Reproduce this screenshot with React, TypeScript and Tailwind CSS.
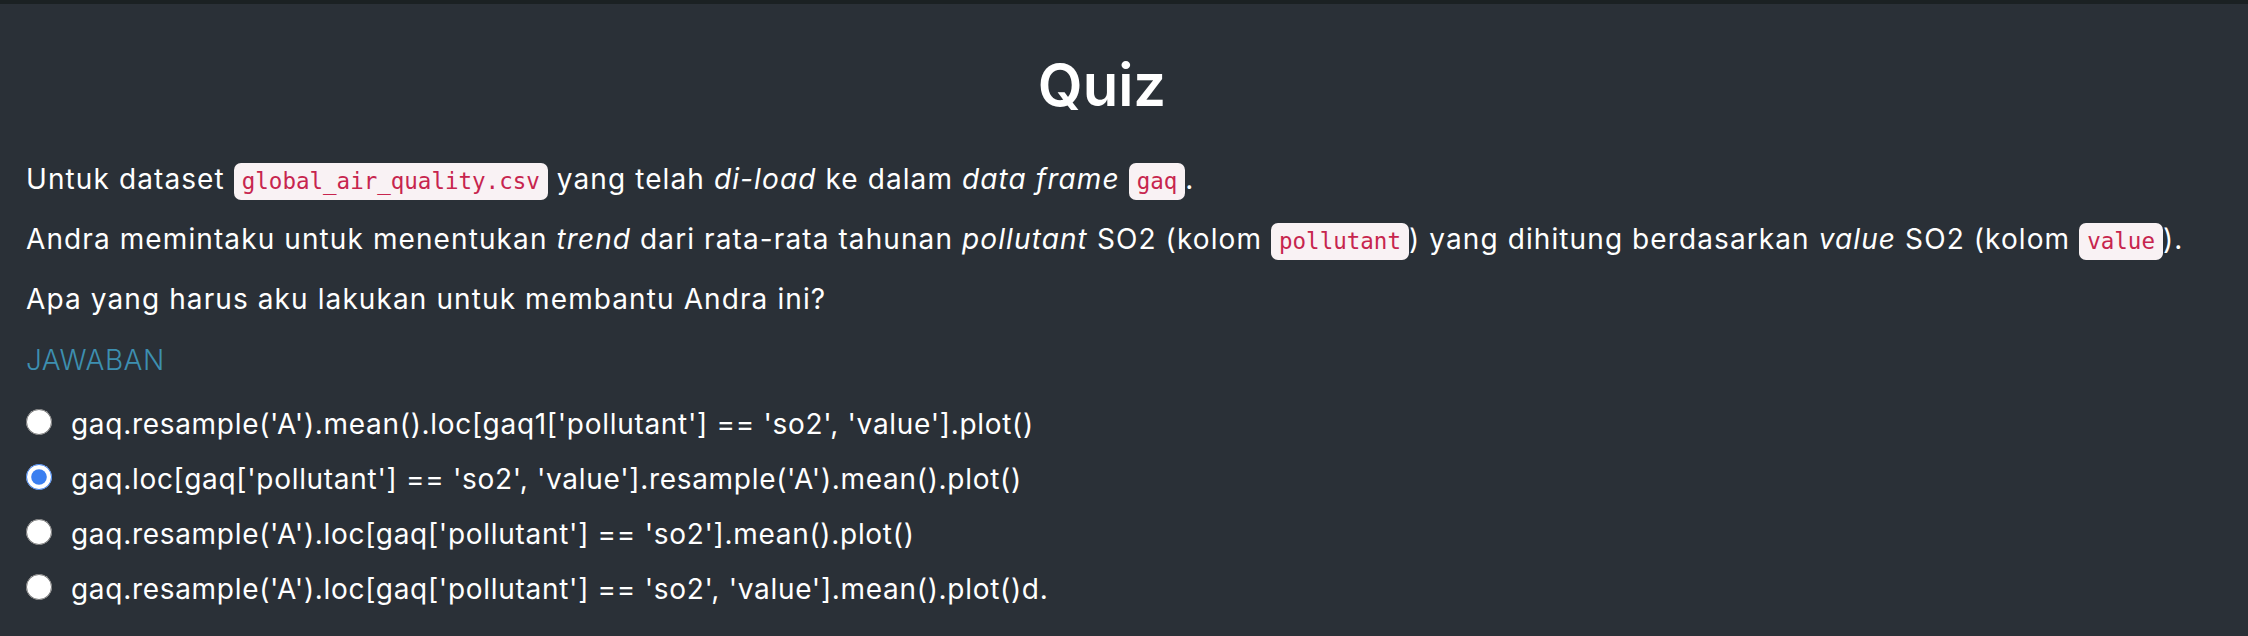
import type { ReactNode } from "react";

function Code({ children }: { children: ReactNode }) {
  return (
    <code className="inline-block h-[37px] px-[8px] rounded-[7px] bg-[#f9f2f4] text-[#c7254e] font-['DejaVu_Sans_Mono',monospace] text-[22.5px] leading-[37px] tracking-normal align-baseline">
      {children}
    </code>
  );
}

const options = [
  "gaq.resample('A').mean().loc[gaq1['pollutant'] == 'so2', 'value'].plot()",
  "gaq.loc[gaq['pollutant'] == 'so2', 'value'].resample('A').mean().plot()",
  "gaq.resample('A').loc[gaq['pollutant'] == 'so2'].mean().plot()",
  "gaq.resample('A').loc[gaq['pollutant'] == 'so2', 'value'].mean().plot()d.",
];

export default function App() {
  return (
    <div className="min-h-screen bg-[#2a3037] border-t-4 border-[#1b2123] font-['Inter',sans-serif] text-white">
      <div className="px-[26px]">
        {/* Title */}
        <h1 className="mt-[51px] pr-[44px] text-center text-[58px] leading-[60px] font-semibold">
          Quiz
        </h1>

        {/* Question */}
        <div className="mt-[43px] flex flex-col gap-[18px] text-[28px] leading-[42px] tracking-[1.1px]">
          <p>
            Untuk dataset <Code>global_air_quality.csv</Code> yang telah{" "}
            <em>di-load</em> ke dalam <em>data frame</em> <Code>gaq</Code>.
          </p>
          <p>
            Andra memintaku untuk menentukan <em>trend</em> dari rata-rata
            tahunan <em>pollutant</em> SO2 (kolom <Code>pollutant</Code>) yang
            dihitung berdasarkan <em>value</em> SO2 (kolom <Code>value</Code>).
          </p>
          <p>Apa yang harus aku lakukan untuk membantu Andra ini?</p>
        </div>

        <div className="mt-[19px] text-[28px] leading-[42px] font-light tracking-[0.5px] text-[#3d8fb0]">
          JAWABAN
        </div>

        {/* Options */}
        <div className="mt-[15px] flex flex-col">
          {options.map((opt, i) => (
            <label key={i} className="flex items-center h-[55px] gap-[19px]">
              <input
                type="radio"
                name="jawaban"
                defaultChecked={i === 1}
                className="m-0 mb-1 w-[26px] h-[26px] accent-[#3b7ff0] shrink-0"
              />
              <span className="text-[28px] leading-[42px] tracking-[0.7px]">
                {opt}
              </span>
            </label>
          ))}
        </div>
      </div>
    </div>
  );
}
